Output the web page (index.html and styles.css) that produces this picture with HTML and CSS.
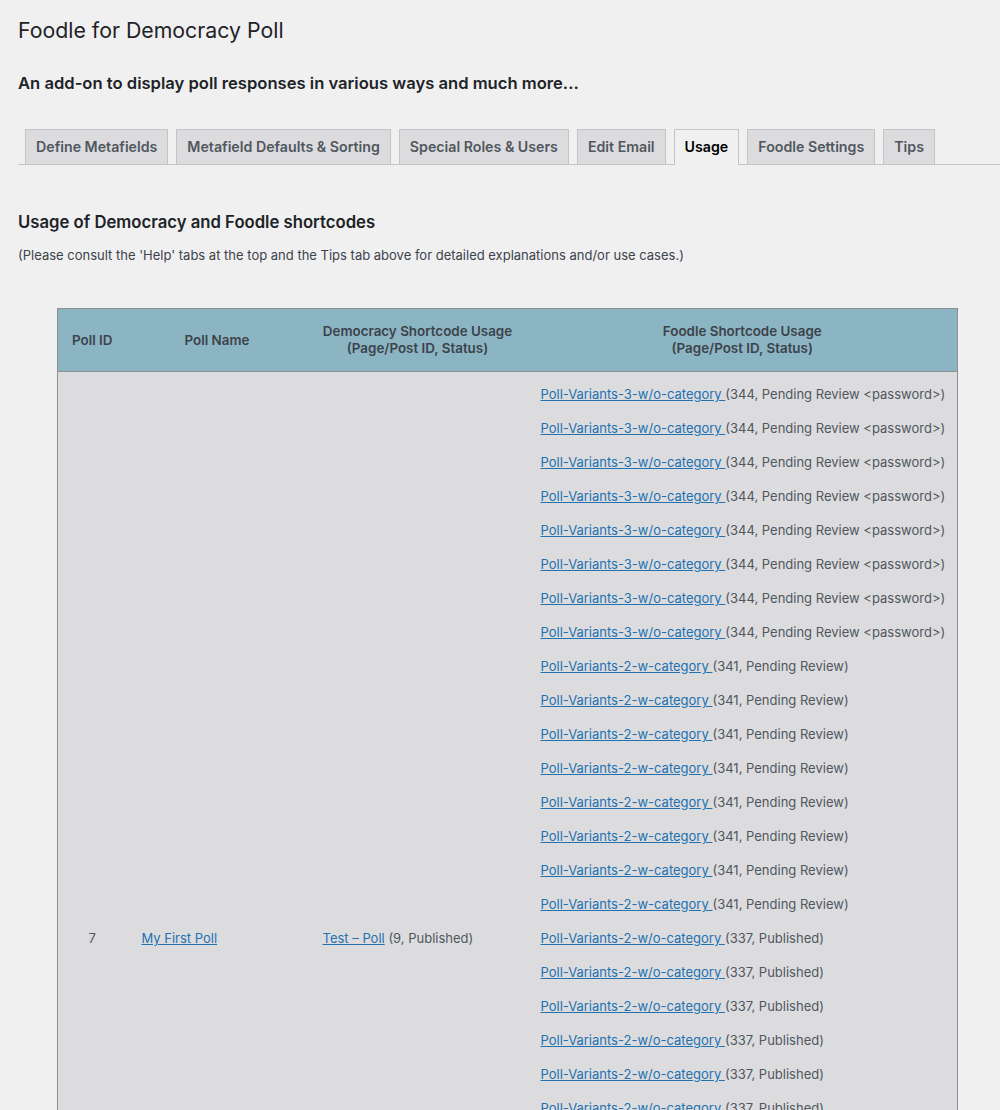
FILE: index.html
```html
<!DOCTYPE html>
<html>
<head>
<meta charset="utf-8">
<link rel="stylesheet" href="styles.css">
</head>
<body>
<div class="wrap">
  <h1 class="title">Foodle for Democracy Poll</h1>
  <h2 class="subtitle">An add-on to display poll responses in various ways and much more...</h2>
  <nav class="tabs">
    <a class="tab">Define Metafields</a>
    <a class="tab">Metafield Defaults &amp; Sorting</a>
    <a class="tab">Special Roles &amp; Users</a>
    <a class="tab">Edit Email</a>
    <a class="tab active">Usage</a>
    <a class="tab">Foodle Settings</a>
    <a class="tab">Tips</a>
  </nav>
  <h2 class="section">Usage of Democracy and Foodle shortcodes</h2>
  <p class="note">(Please consult the 'Help' tabs at the top and the Tips tab above for detailed explanations and/or use cases.)</p>
  <table class="usage">
    <colgroup>
      <col class="w1"><col class="w2"><col class="w3"><col class="w4">
    </colgroup>
    <thead>
      <tr>
        <th>Poll ID</th>
        <th>Poll Name</th>
        <th>Democracy Shortcode Usage<br>(Page/Post ID, Status)</th>
        <th>Foodle Shortcode Usage<br>(Page/Post ID, Status)</th>
      </tr>
    </thead>
    <tbody>
      <tr>
        <td class="id">7</td>
        <td><a href="#">My First Poll</a></td>
        <td><a href="#">Test – Poll</a> (9, Published)</td>
        <td class="list" id="foodle"></td>
      </tr>
    </tbody>
  </table>
</div>
<script src="app.js"></script>
</body>
</html>
```
FILE: app.js
```js
var groups = [
  ["Poll-Variants-3-w/o-category", "(344, Pending Review <password>)", 8],
  ["Poll-Variants-2-w-category", "(341, Pending Review)", 8],
  ["Poll-Variants-2-w/o-category", "(337, Published)", 17]
];
var cell = document.getElementById("foodle");
groups.forEach(function (g) {
  for (var i = 0; i < g[2]; i++) {
    var d = document.createElement("div");
    d.className = "entry";
    var a = document.createElement("a");
    a.href = "#";
    a.textContent = g[0] + " ";
    d.appendChild(a);
    d.appendChild(document.createTextNode(g[1]));
    cell.appendChild(d);
  }
});
```
FILE: styles.css
```css
html, body {
  margin: 0;
  padding: 0;
  background: #f0f0f1;
}
body {
  font-family: Inter, "Liberation Sans", sans-serif;
  color: #3c434a;
  font-size: 13px;
}
.wrap {
  padding: 0 0 0 18px;
}
.title {
  margin: 0;
  padding: 16px 0 0;
  font-size: 21.3px;
  font-weight: 400;
  line-height: 29px;
  color: #1d2327;
}
.subtitle {
  margin: 27px 0 0;
  font-size: 16.6px;
  font-weight: 600;
  line-height: 22px;
  color: #1d2327;
}
.tabs {
  display: flex;
  margin-top: 35px;
  border-bottom: 1px solid #c3c4c7;
  padding-left: 7px;
  gap: 8px;
  align-items: flex-end;
}
.tab {
  display: block;
  padding: 5px 10px;
  font-size: 14.2px;
  line-height: 24px;
  font-weight: 600;
  color: #50575e;
  background: #dcdcde;
  border: 1px solid #c3c4c7;
  border-bottom: none;
}
.tab.active {
  background: #f0f0f1;
  color: #000;
  margin-bottom: -1px;
  padding-bottom: 6px;
}
.section {
  margin: 46px 0 0;
  font-size: 16.7px;
  font-weight: 600;
  line-height: 22px;
  color: #1d2327;
}
.note {
  margin: 13px 0 0;
  font-size: 13px;
  line-height: 18px;
  color: #3c434a;
}
.usage {
  margin: 44px 0 0 39px;
  width: 901px;
  table-layout: fixed;
  border-collapse: collapse;
  border: 1px solid #8c8f94;
}
.usage .w1 { width: 69px; }
.usage .w2 { width: 181px; }
.usage .w3 { width: 220px; }
.usage .w4 { width: 430px; }
.usage th {
  background: #8cb5c4;
  color: #3c434a;
  font-weight: 600;
  font-size: 13.4px;
  line-height: 17px;
  padding: 14px 6px;
  text-align: center;
  border-bottom: 1px solid #8c8f94;
}
.usage td {
  background: #dcdcde;
  vertical-align: middle;
  padding: 5px 14px 5px 15px;
  color: #50575e;
  line-height: 20px;
}
.usage td.id {
  text-align: center;
  padding: 5px 6px;
}
.usage td.list {
  padding: 5px 6px 5px 13px;
}
.usage a {
  color: #2271b1;
  text-decoration: underline;
}
.entry {
  line-height: 34px;
  white-space: nowrap;
}
```
